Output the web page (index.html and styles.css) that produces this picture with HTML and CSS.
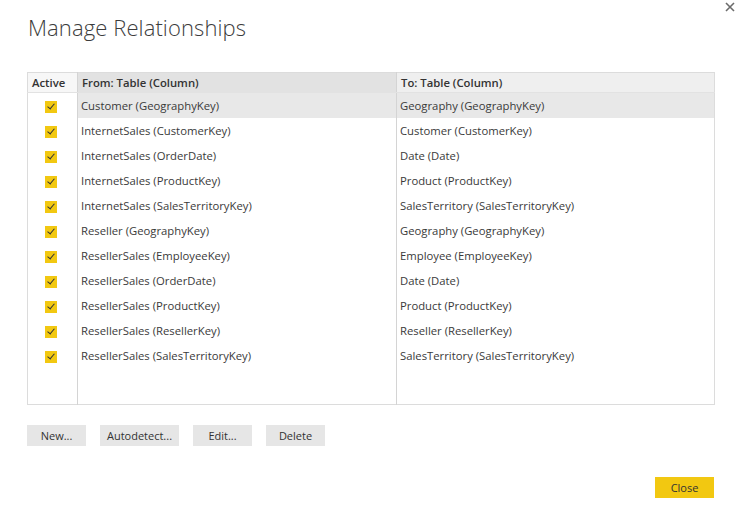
FILE: index.html
```html
<!DOCTYPE html>
<html>
<head>
<meta charset="utf-8">
<link rel="stylesheet" href="styles.css">
</head>
<body>
<div class="dialog">
  <button class="close-x" aria-label="Close">
    <svg width="10" height="10" viewBox="0 0 10 10"><path d="M1 1L9 9M9 1L1 9" stroke="#6b6b6b" stroke-width="1.6"/></svg>
  </button>
  <h1 class="title">Manage Relationships</h1>
  <div class="grid">
    <table class="rel">
      <colgroup><col class="c-active"><col class="c-from"><col class="c-to"></colgroup>
      <thead>
        <tr><th class="h-active">Active</th><th class="h-from">From: Table (Column)</th><th class="h-to">To: Table (Column)</th></tr>
      </thead>
      <tbody>
        <tr class="sel"><td class="chk"><span class="box"></span></td><td>Customer (GeographyKey)</td><td>Geography (GeographyKey)</td></tr>
        <tr><td class="chk"><span class="box"></span></td><td>InternetSales (CustomerKey)</td><td>Customer (CustomerKey)</td></tr>
        <tr><td class="chk"><span class="box"></span></td><td>InternetSales (OrderDate)</td><td>Date (Date)</td></tr>
        <tr><td class="chk"><span class="box"></span></td><td>InternetSales (ProductKey)</td><td>Product (ProductKey)</td></tr>
        <tr><td class="chk"><span class="box"></span></td><td>InternetSales (SalesTerritoryKey)</td><td>SalesTerritory (SalesTerritoryKey)</td></tr>
        <tr><td class="chk"><span class="box"></span></td><td>Reseller (GeographyKey)</td><td>Geography (GeographyKey)</td></tr>
        <tr><td class="chk"><span class="box"></span></td><td>ResellerSales (EmployeeKey)</td><td>Employee (EmployeeKey)</td></tr>
        <tr><td class="chk"><span class="box"></span></td><td>ResellerSales (OrderDate)</td><td>Date (Date)</td></tr>
        <tr><td class="chk"><span class="box"></span></td><td>ResellerSales (ProductKey)</td><td>Product (ProductKey)</td></tr>
        <tr><td class="chk"><span class="box"></span></td><td>ResellerSales (ResellerKey)</td><td>Reseller (ResellerKey)</td></tr>
        <tr><td class="chk"><span class="box"></span></td><td>ResellerSales (SalesTerritoryKey)</td><td>SalesTerritory (SalesTerritoryKey)</td></tr>
        <tr class="filler"><td></td><td></td><td></td></tr>
      </tbody>
    </table>
  </div>
  <div class="actions">
    <button class="btn">New...</button>
    <button class="btn btn-wide">Autodetect...</button>
    <button class="btn">Edit...</button>
    <button class="btn">Delete</button>
  </div>
  <div class="footer">
    <button class="btn btn-primary">Close</button>
  </div>
</div>
</body>
</html>
```
FILE: styles.css
```css
html, body {
  margin: 0;
  padding: 0;
  background: #ffffff;
}
body {
  font-family: "Open Sans", "Noto Sans", sans-serif;
  color: #333333;
}
.dialog {
  position: relative;
  width: 743px;
  height: 530px;
  box-sizing: border-box;
  padding: 10px 28px 0 27px;
}
.close-x {
  position: absolute;
  top: 2px;
  right: 8px;
  border: 0;
  background: none;
  padding: 0;
  width: 10px;
  height: 10px;
  display: block;
}
.close-x svg { display: block; }
.title {
  margin: 0 0 0 1px;
  font-weight: 300;
  font-size: 22px;
  line-height: 34px;
  color: #3c3c3c;
  letter-spacing: 0.1px;
}
.grid {
  margin-top: 28px;
  width: 688px;
}
.rel {
  width: 688px;
  border-collapse: collapse;
  table-layout: fixed;
  font-size: 11.3px;
  border: 1px solid #dcdcdc;
}
.c-active { width: 50px; }
.c-from { width: 319px; }
.rel th {
  height: 19px;
  padding: 0 4px;
  text-align: left;
  font-weight: 600;
  color: #333;
  border-bottom: 1px solid #e2e2e2;
}
.rel th.h-active { background: #f7f7f7; padding-left: 4px; }
.rel th.h-from { background: #e2e2e2; border-left: 1px solid #d4d4d4; }
.rel th.h-to { background: #efefef; border-left: 1px solid #d4d4d4; }
.rel td {
  height: 25px;
  padding: 0 4px 0 3px;
  color: #3a3a3a;
  white-space: nowrap;
}
.rel td + td { border-left: 1px solid #d4d4d4; }
.rel tr.sel td + td { background: #e8e8e8; }
.rel tr.filler td { height: 36px; }
.chk { text-align: center; }
.box {
  display: inline-block;
  width: 12px;
  height: 12px;
  background: #f2c811;
  position: relative;
  vertical-align: middle;
  margin-left: -2px;
}
.box::after {
  content: "";
  position: absolute;
  left: 4px;
  top: 1.5px;
  width: 3px;
  height: 6px;
  border-right: 1.6px solid #333;
  border-bottom: 1.6px solid #333;
  transform: rotate(40deg);
}
.actions {
  display: flex;
  gap: 14px;
  margin-top: 20px;
}
.btn {
  font-family: "Open Sans", "Noto Sans", sans-serif;
  font-size: 11px;
  color: #333;
  background: #e6e6e6;
  border: 0;
  height: 21px;
  width: 59px;
  padding: 0;
}
.btn-wide { width: 79px; }
.footer {
  display: flex;
  justify-content: flex-end;
  margin-top: 31px;
  margin-right: 1px;
}
.btn-primary {
  background: #f2c811;
  color: #333;
}
```
